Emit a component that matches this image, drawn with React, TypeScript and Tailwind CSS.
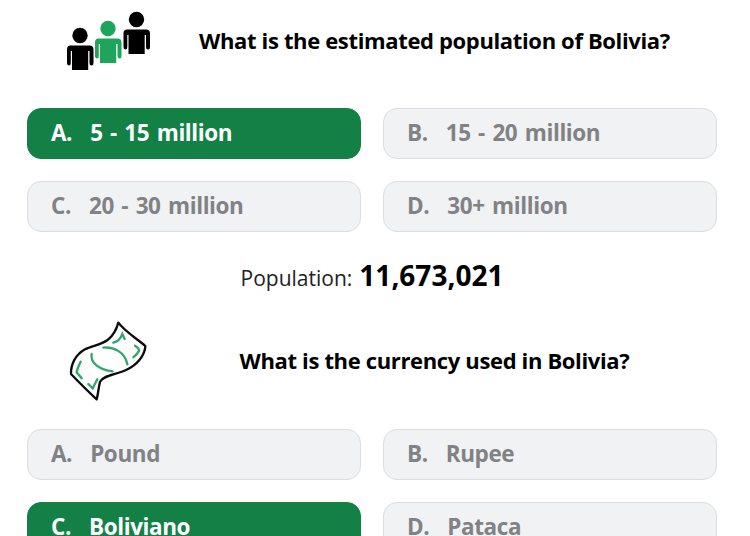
function People() {
  const person = (x: number, y: number, fill: string) => (
    <g fill={fill} transform={`translate(${x} ${y})`}>
      <circle cx="13" cy="-1.5" r="7.7" />
      <path d="M3.5 8.5H22.5Q26.5 8.5 26.5 12.5V26Q26.5 28.5 24.5 28.5T22.5 26V14H21.2V33H5V14H3.8V26Q3.8 28.5 2 28.5T0 26V12.5Q0 8.5 3.5 8.5Z" />
    </g>
  );
  return (
    <svg width="120" height="80" viewBox="50 0 120 80" className="block">
      {person(67, 36, "#000000")}
      {person(95, 29, "#1fa55b")}
      {person(123.5, 20, "#000000")}
    </svg>
  );
}

function Money() {
  return (
    <svg width="120" height="100" viewBox="0 0 360 300" fill="none" className="block">
      <path d="M205 38C225 65 260 85 286 108C285 135 262 165 228 180C195 195 160 195 150 215C145 235 145 250 140 268C115 245 90 220 63 192C62 165 75 135 105 118C135 100 185 110 205 38Z" stroke="#0b0b0b" strokeWidth="7" strokeLinejoin="round" />
      <g stroke="#35a56f" strokeWidth="7" strokeLinecap="round">
        <path d="M160 113C190 110 225 125 232 163" />
        <path d="M125 132C120 160 150 180 188 184" />
        <path d="M190 98C203 95 210 90 217 72L224 87" />
        <path d="M255 107C265 113 270 120 265 125C262 132 258 135 250 142" />
        <path d="M92 155C85 170 80 180 80 187L95 205" />
        <path d="M115 222L128 235L142 208" />
      </g>
    </svg>
  );
}

function Option({ letter, text, selected }: { letter: string; text: string; selected?: boolean }) {
  return (
    <div
      className={`flex h-[51px] items-center rounded-[14px] border pl-[23px] text-[22.5px] font-bold leading-none tracking-[-0.4px] [word-spacing:2px] ${
        selected ? "border-[#138046] bg-[#138046] text-white" : "border-[#dcdde0] bg-[#f1f2f4] text-[#808285]"
      }`}
    >
      <span className="mr-[18px]">{letter}</span>
      <span>{text}</span>
    </div>
  );
}

export default function App() {
  return (
    <div
      className="h-[536px] w-[750px] overflow-hidden bg-white pl-[27px] pr-[33px] text-black"
      style={{ fontFamily: '"Open Sans", "Noto Sans", sans-serif' }}
    >
      <div className="flex h-[81px] items-center">
        <div className="-ml-[27px] mr-[2px] w-[150px] shrink-0 pl-[50px]">
          <People />
        </div>
        <p className="w-[565px] shrink-0 text-center text-[22px] font-bold tracking-[-0.35px] whitespace-nowrap">What is the estimated population of Bolivia?</p>
      </div>
      <div className="mt-[27px] grid grid-cols-2 gap-x-[22px] gap-y-[22px]">
        <Option letter="A." text="5 - 15 million" selected />
        <Option letter="B." text="15 - 20 million" />
        <Option letter="C." text="20 - 30 million" />
        <Option letter="D." text="30+ million" />
      </div>
      <div className="mt-[22px] flex h-[38px] items-baseline justify-center gap-[7px]">
        <span className="text-[21px] text-[#222222]">Population:</span>
        <span className="text-[28px] font-bold">11,673,021</span>
      </div>
      <div className="mt-[18px] flex h-[100px] items-center">
        <div className="-ml-[27px] mr-[2px] w-[150px] shrink-0 pl-[50px]">
          <Money />
        </div>
        <p className="w-[565px] shrink-0 text-center text-[22px] font-bold tracking-[-0.35px] whitespace-nowrap">What is the currency used in Bolivia?</p>
      </div>
      <div className="mt-[19px] grid grid-cols-2 gap-x-[22px] gap-y-[22px]">
        <Option letter="A." text="Pound" />
        <Option letter="B." text="Rupee" />
        <Option letter="C." text="Boliviano" selected />
        <Option letter="D." text="Pataca" />
      </div>
    </div>
  );
}
